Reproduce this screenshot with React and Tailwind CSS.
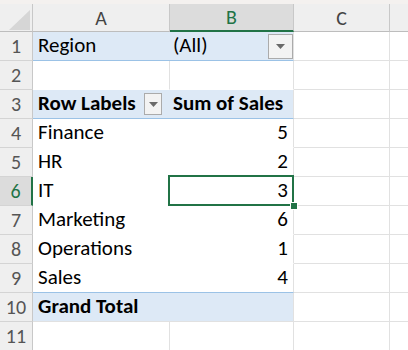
import React from 'react'

const FONT = { fontFamily: 'Carlito, Calibri, Lato, "Liberation Sans", sans-serif' }

const ROWS = [
  { n: 1, a: 'Region', b: '(All)', fill: true, filter: true, line: 'blue' },
  { n: 2, a: '', b: '', line: 'none', split: true },
  { n: 3, a: 'Row Labels', b: 'Sum of Sales', fill: true, bold: true, sort: true, line: 'blue' },
  { n: 4, a: 'Finance', b: '5', num: true, line: 'none' },
  { n: 5, a: 'HR', b: '2', num: true, line: 'none' },
  { n: 6, a: 'IT', b: '3', num: true, line: 'none', selected: true },
  { n: 7, a: 'Marketing', b: '6', num: true, line: 'none' },
  { n: 8, a: 'Operations', b: '1', num: true, line: 'none' },
  { n: 9, a: 'Sales', b: '4', num: true, line: 'blue' },
  { n: 10, a: 'Grand Total', b: '', fill: true, bold: true, line: 'grid' },
  { n: 11, a: '', b: '', line: 'grid', split: true },
]

function DropButton({ big }) {
  return (
    <span
      className={
        big
          ? 'flex h-[25px] w-[25px] shrink-0 items-center justify-center border border-[#ababab] bg-[#f3f3f3]'
          : 'flex h-[22px] w-[18px] shrink-0 items-center justify-center border border-[#ababab] bg-[#f3f3f3]'
      }
    >
      <svg width="9" height="5" viewBox="0 0 9 5">
        <path d="M0 0 L9 0 L4.5 5 Z" fill="#6a6a6a" />
      </svg>
    </span>
  )
}

function SheetRow({ row }) {
  const sel = row.selected
  const bottom =
    row.line === 'blue' ? 'border-b-[#9bc2e6]' : row.line === 'grid' ? 'border-b-[#e1e1e1]' : 'border-b-transparent'
  const fill = row.fill ? 'bg-[#dde9f6]' : 'bg-white'
  const weight = row.bold ? 'font-bold' : 'font-normal'
  return (
    <div className="flex h-[29px]">
      <div
        className={
          sel
            ? 'flex w-[33px] shrink-0 items-center justify-center border-b border-r-2 border-b-[#d4d4d4] border-r-[#217346] bg-[#dcdcdc] text-[20px] text-[#217346]'
            : 'flex w-[33px] shrink-0 items-center justify-center border-b border-r border-b-[#d4d4d4] border-r-[#c8c8c8] bg-[#efefef] text-[20px] text-[#555]'
        }
      >
        {row.n}
      </div>
      <div
        className={`flex w-[137px] shrink-0 items-center justify-between border-b pl-[5px] pr-[8px] text-[21px] text-black ${bottom} ${fill} ${weight} ${
          row.split ? 'border-r border-r-[#e1e1e1]' : ''
        }`}
      >
        <span className="whitespace-nowrap">{row.a}</span>
        {row.sort && <DropButton />}
      </div>
      <div
        className={`relative flex w-[124px] shrink-0 items-center border-b border-r border-r-[#e1e1e1] text-[21px] text-black ${bottom} ${fill} ${weight} ${
          row.num ? 'justify-end pr-[5px]' : 'justify-between pl-[3px] pr-0'
        }`}
      >
        <span className="whitespace-nowrap">{row.b}</span>
        {row.filter && <DropButton big />}
        {sel && (
          <>
            <div className="absolute -left-[2px] -top-[2px] z-10 h-[31px] w-[126px] border-2 border-[#217346]" />
            <div className="absolute -bottom-[5px] -right-[5px] z-20 h-[8px] w-[8px] border border-white bg-[#217346]" />
          </>
        )}
      </div>
      <div className="w-[96px] shrink-0 border-b border-r border-b-[#e1e1e1] border-r-[#e1e1e1] bg-white" />
      <div className="flex-1 border-b border-b-[#e1e1e1] bg-white" />
    </div>
  )
}

export default function App() {
  return (
    <div className="h-[350px] w-[408px] overflow-hidden bg-white" style={FONT}>
      <div className="h-[4px] bg-[#f4f1ef]" />
      <div className="flex h-[28px] text-[20px]">
        <div className="relative w-[33px] shrink-0 border-b border-r border-b-[#bdbdbd] border-r-[#c8c8c8] bg-[#efefef]">
          <svg className="absolute left-[9px] top-[6px]" width="21" height="20" viewBox="0 0 21 20">
            <path d="M21 0 L21 20 L0 20 Z" fill="#d6d6d6" />
          </svg>
        </div>
        <div className="flex w-[137px] shrink-0 items-center justify-center border-b border-r border-b-[#bdbdbd] border-r-[#c8c8c8] bg-[#efefef] font-light text-[#444]">
          A
        </div>
        <div className="flex w-[124px] shrink-0 items-center justify-center border-b-2 border-r border-b-[#217346] border-r-[#c8c8c8] bg-[#dcdcdc] text-[#217346]">
          B
        </div>
        <div className="flex w-[96px] shrink-0 items-center justify-center border-b border-r border-b-[#bdbdbd] border-r-[#c8c8c8] bg-[#efefef] font-light text-[#444]">
          C
        </div>
        <div className="flex-1 border-b border-b-[#bdbdbd] bg-[#efefef]" />
      </div>
      {ROWS.map((row) => (
        <SheetRow key={row.n} row={row} />
      ))}
    </div>
  )
}
